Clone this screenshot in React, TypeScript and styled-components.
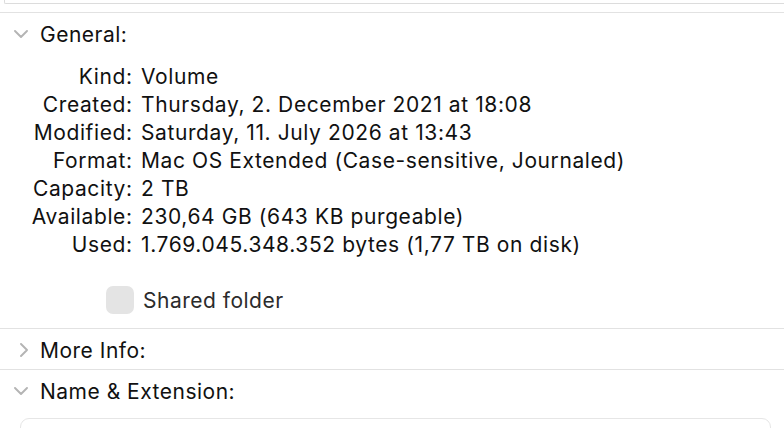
import React from "react";
import styled, { createGlobalStyle } from "styled-components";

const Global = createGlobalStyle`
  html, body { margin: 0; padding: 0; background: #ffffff; overflow: hidden; }
  body { font-family: Inter, "Noto Sans", sans-serif; -webkit-font-smoothing: antialiased; }
`;

const Page = styled.div`
  width: 784px;
  height: 428px;
  overflow: hidden;
  display: flex;
  flex-direction: column;
  background: #fff;
  & > * { flex-shrink: 0; }
`;

const TopBox = styled.div`
  height: 3px;
  margin-left: 4px;
  border-left: 1px solid #dcdcdc;
  border-bottom: 1px solid #dcdcdc;
  border-bottom-left-radius: 2px;
  margin-bottom: 8px;
`;

const Section = styled.section`
  border-top: 1px solid #e2e2e2;
  display: flex;
  flex-direction: column;
  & > * { flex-shrink: 0; }
`;

const Header = styled.div`
  height: 40px;
  box-sizing: border-box;
  padding-top: 2px;
  display: flex;
  align-items: center;
  padding-left: 14px;
  gap: 12px;
  font-size: 21px;
  color: #111;
  letter-spacing: 0.5px;
`;

const ChevronBox = styled.span<{ $open: boolean }>`
  width: 14px;
  display: inline-flex;
  justify-content: ${(p) => (p.$open ? "center" : "flex-end")};
  align-items: center;
`;

const Details = styled.div`
  display: grid;
  grid-template-columns: 132px auto;
  column-gap: 9px;
  grid-auto-rows: 28px;
  align-items: center;
  padding-top: 9px;
  font-size: 21px;
  color: #111;
  letter-spacing: 0.6px;
`;

const Label = styled.span`
  text-align: right;
  white-space: nowrap;
  margin-right: -0.6px;
`;

const Value = styled.span`
  white-space: nowrap;
`;

const CheckRow = styled.label`
  display: flex;
  align-items: center;
  gap: 9px;
  margin: 28px 0 14px 106px;
  font-size: 21px;
  color: #2b2b2b;
  letter-spacing: 0.5px;
`;

const CheckBox = styled.span`
  width: 28px;
  height: 28px;
  border-radius: 7px;
  background: #e4e4e4;
`;

const InnerBox = styled.div`
  margin: 8px 13px 0 20px;
  height: 40px;
  border: 1px solid #e6e6e6;
  border-radius: 9px;
`;

const Chevron = ({ open }: { open: boolean }) => (
  <ChevronBox $open={open}>
    {open ? (
      <svg width="14" height="8" viewBox="0 0 14 8">
        <path d="M1 1 L7 7 L13 1" fill="none" stroke="#b4b4b4" strokeWidth="1.9" strokeLinecap="round" strokeLinejoin="round" />
      </svg>
    ) : (
      <svg width="8" height="14" viewBox="0 0 8 14">
        <path d="M1 1 L7 7 L1 13" fill="none" stroke="#b4b4b4" strokeWidth="1.9" strokeLinecap="round" strokeLinejoin="round" />
      </svg>
    )}
  </ChevronBox>
);

const rows: [string, string][] = [
  ["Kind:", "Volume"],
  ["Created:", "Thursday, 2. December 2021 at 18:08"],
  ["Modified:", "Saturday, 11. July 2026 at 13:43"],
  ["Format:", "Mac OS Extended (Case-sensitive, Journaled)"],
  ["Capacity:", "2 TB"],
  ["Available:", "230,64 GB (643 KB purgeable)"],
  ["Used:", "1.769.045.348.352 bytes (1,77 TB on disk)"],
];

export default function App() {
  return (
    <Page>
      <Global />
      <TopBox />
      <Section>
        <Header>
          <Chevron open />
          General:
        </Header>
        <Details>
          {rows.map(([l, v]) => (
            <React.Fragment key={l}>
              <Label>{l}</Label>
              <Value>{v}</Value>
            </React.Fragment>
          ))}
        </Details>
        <CheckRow>
          <CheckBox />
          Shared folder
        </CheckRow>
      </Section>
      <Section>
        <Header>
          <Chevron open={false} />
          More Info:
        </Header>
      </Section>
      <Section>
        <Header>
          <Chevron open />
          Name &amp; Extension:
        </Header>
        <InnerBox />
      </Section>
    </Page>
  );
}
